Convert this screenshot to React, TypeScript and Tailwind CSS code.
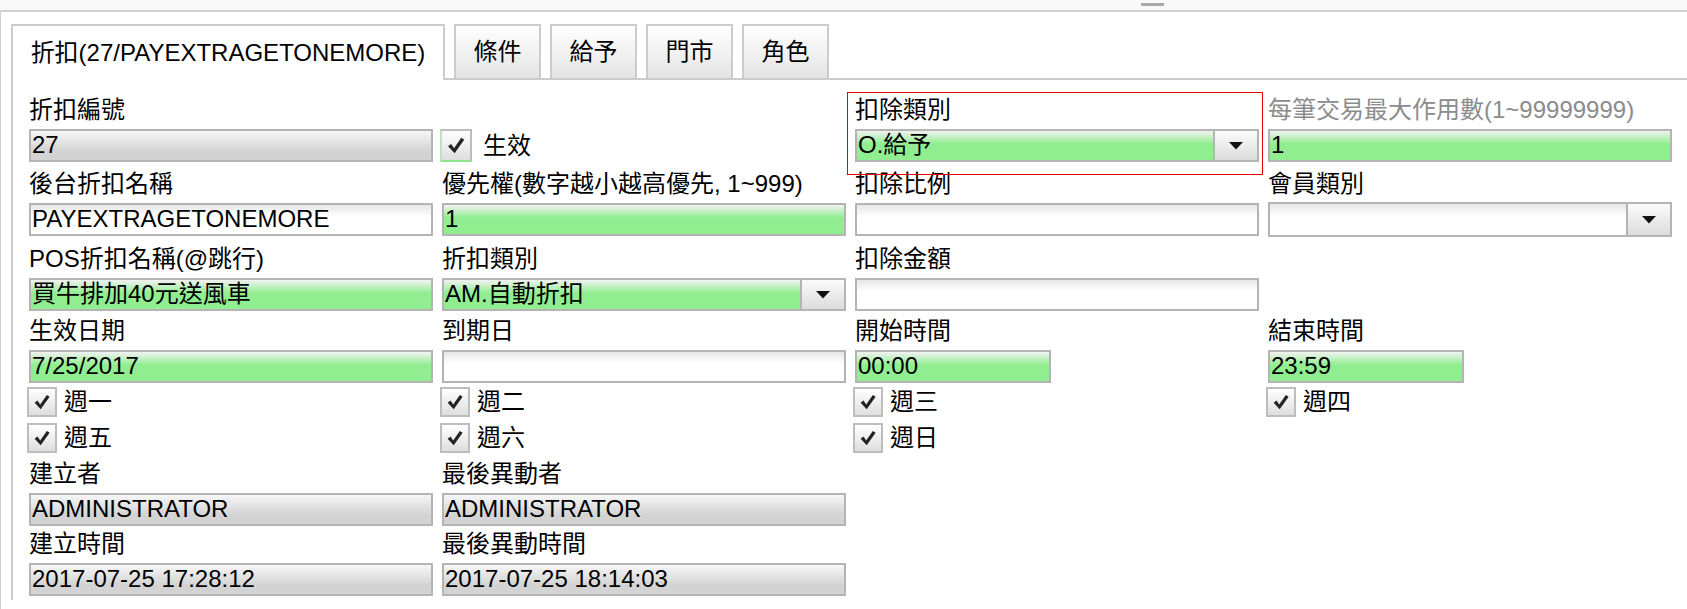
import React from 'react';

const FONT = "font-['Liberation_Sans','Noto_Sans_CJK_TC',sans-serif]";

const BG: Record<string, string> = {
  green: 'bg-[linear-gradient(to_bottom,#f2f2f2,#90ee90_45%)]',
  gray: 'bg-[linear-gradient(to_bottom,#f6f6f6,#d3d3d3_70%)]',
  white: 'bg-[linear-gradient(to_bottom,#e6e6e6,#ffffff_40%)]',
};

const Check = () => (
  <svg viewBox="0 0 30 30" className="w-full h-full">
    <path d="M6.5 15.8 L9.8 13.4 L12.9 17.9 L20.6 6.8 L23.8 8.9 L13.5 23.4 Z" fill="#232323" />
  </svg>
);

const Field = ({ value = '', tone = 'white', select = false, w = 'w-full', h = 'h-[33px]' }: { value?: string; tone?: string; select?: boolean; w?: string; h?: string }) => (
  <div className={`${w} ${h} flex border-2 border-[#b4b4b4] ${BG[tone]}`}>
    <div className="flex-1 flex items-center pl-[1px] pb-[2px] text-[24px] text-black whitespace-nowrap overflow-hidden">{value}</div>
    {select && (
      <div className="w-[44px] border-l-2 border-[#b4b4b4] bg-[linear-gradient(to_bottom,#fbfbfb,#dcdcdc)] flex items-center justify-center">
        <svg width="14" height="8" viewBox="0 0 14 8"><path d="M0 0 L14 0 L7 7.5 Z" fill="#111" /></svg>
      </div>
    )}
  </div>
);

const Label = ({ text, gray = false }: { text: string; gray?: boolean }) => (
  <div className={`h-[37px] leading-[35px] text-[24px] whitespace-nowrap ${gray ? 'text-[#8c8c8c]' : 'text-black'}`}>{text}</div>
);

const Box = ({ label }: { label: string }) => (
  <div className="flex items-center h-full">
    <div className="w-[30px] h-[30px] -ml-[2px] border-2 border-[#bdbdbd] bg-[linear-gradient(to_bottom,#ffffff,#dedede)]">
      <Check />
    </div>
    <span className="ml-[7px] text-[24px] text-black">{label}</span>
  </div>
);

const tabs = ['條件', '給予', '門市', '角色'];

export default function App() {
  return (
    <div className={`w-[1687px] h-[609px] bg-white overflow-hidden ${FONT}`}>
      <div className="h-[10px] bg-[#f9f9f9] flex">
        <div className="ml-[1141px] mt-[3px] w-[23px] h-[3px] bg-[#a9a9a9]" />
      </div>
      <div className="border-t-2 border-l border-[#cfcfcf] pl-[10px] pt-[12px] h-[600px]">
        {/* tabs */}
        <div className="flex items-end">
          <div className="w-[434px] h-[56px] border-t-2 border-x-2 border-[#cccccc] bg-white flex items-center justify-center text-[24px] text-black">
            折扣(27/PAYEXTRAGETONEMORE)
          </div>
          <div className="flex-1 flex gap-[9px] pl-[9px] border-b-2 border-[#cccccc]">
            {tabs.map((t) => (
              <div key={t} className="w-[87px] h-[54px] border-t-2 border-x-2 border-[#cccccc] bg-[linear-gradient(to_bottom,#ffffff,#e4e4e4)] flex items-center justify-center text-[24px] text-black">
                {t}
              </div>
            ))}
          </div>
        </div>

        {/* panel */}
        <div className="border-l-2 border-[#cccccc] pl-[16px] pt-[12px] h-[520px]">
          {/* row A */}
          <div className="grid grid-cols-[repeat(4,404px)] gap-x-[9px]">
            <div>
              <Label text="折扣編號" />
              <Field value="27" tone="gray" />
            </div>
            <div>
              <div className="h-[37px]" />
              <div className="flex items-center h-[33px]">
                <div className="w-[32px] h-[33px] -ml-[2px] border-2 border-[#bdbdbd] border-b-[#8ee58e] border-l-[#b9e6b9] bg-[linear-gradient(to_bottom,#ffffff,#dedede)]">
                  <Check />
                </div>
                <span className="ml-[11px] text-[24px] text-black">生效</span>
              </div>
            </div>
            <div className="relative">
              <div className="absolute -left-[8px] -right-[4px] top-0 -bottom-[13px] border border-[#e20000] pointer-events-none" />
              <Label text="扣除類別" />
              <Field value="O.給予" tone="green" select />
            </div>
            <div>
              <Label text="每筆交易最大作用數(1~99999999)" gray />
              <Field value="1" tone="green" />
            </div>
          </div>

          {/* row B */}
          <div className="grid grid-cols-[repeat(4,404px)] gap-x-[9px] mt-[4px]">
            <div>
              <Label text="後台折扣名稱" />
              <Field value="PAYEXTRAGETONEMORE" />
            </div>
            <div>
              <Label text="優先權(數字越小越高優先, 1~999)" />
              <Field value="1" tone="green" />
            </div>
            <div>
              <Label text="扣除比例" />
              <Field />
            </div>
            <div>
              <Label text="會員類別" />
              <div className="-mt-[1px]">
                <Field select h="h-[35px]" />
              </div>
            </div>
          </div>

          {/* row C */}
          <div className="grid grid-cols-[repeat(4,404px)] gap-x-[9px] mt-[4px]">
            <div>
              <Label text="POS折扣名稱(@跳行)" />
              <Field value="買牛排加40元送風車" tone="green" />
            </div>
            <div>
              <Label text="折扣類別" />
              <Field value="AM.自動折扣" tone="green" select />
            </div>
            <div>
              <Label text="扣除金額" />
              <Field />
            </div>
            <div />
          </div>

          {/* row D */}
          <div className="grid grid-cols-[repeat(4,404px)] gap-x-[9px] mt-[2px]">
            <div>
              <Label text="生效日期" />
              <Field value="7/25/2017" tone="green" />
            </div>
            <div>
              <Label text="到期日" />
              <Field />
            </div>
            <div>
              <Label text="開始時間" />
              <Field value="00:00" tone="green" w="w-[196px]" />
            </div>
            <div>
              <Label text="結束時間" />
              <Field value="23:59" tone="green" w="w-[196px]" />
            </div>
          </div>

          {/* weekdays */}
          <div className="grid grid-cols-[repeat(4,404px)] gap-x-[9px] h-[37px]">
            <Box label="週一" />
            <Box label="週二" />
            <Box label="週三" />
            <Box label="週四" />
          </div>
          <div className="grid grid-cols-[repeat(4,404px)] gap-x-[9px] h-[36px]">
            <Box label="週五" />
            <Box label="週六" />
            <Box label="週日" />
            <div />
          </div>

          {/* row E */}
          <div className="grid grid-cols-[repeat(4,404px)] gap-x-[9px]">
            <div>
              <Label text="建立者" />
              <Field value="ADMINISTRATOR" tone="gray" />
            </div>
            <div>
              <Label text="最後異動者" />
              <Field value="ADMINISTRATOR" tone="gray" />
            </div>
          </div>

          {/* row F */}
          <div className="grid grid-cols-[repeat(4,404px)] gap-x-[9px]">
            <div>
              <Label text="建立時間" />
              <Field value="2017-07-25 17:28:12" tone="gray" />
            </div>
            <div>
              <Label text="最後異動時間" />
              <Field value="2017-07-25 18:14:03" tone="gray" />
            </div>
          </div>
        </div>
      </div>
    </div>
  );
}
